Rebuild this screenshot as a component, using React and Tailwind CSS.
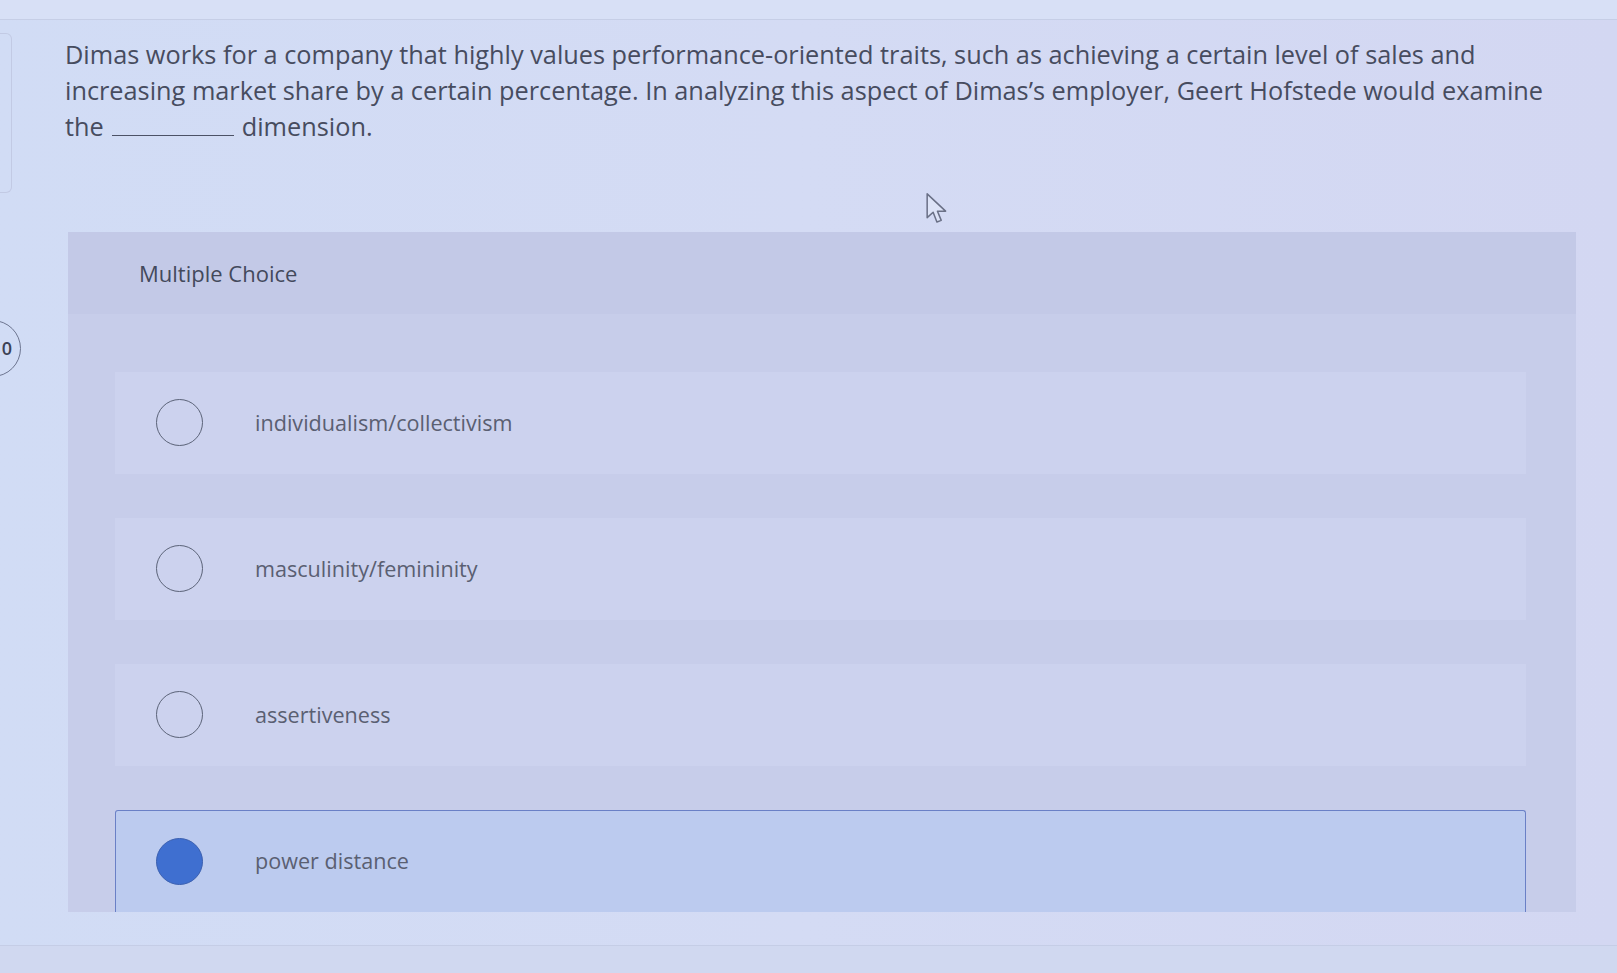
import React from 'react';

const options = [
  { label: 'individualism/collectivism', selected: false },
  { label: 'masculinity/femininity', selected: false },
  { label: 'assertiveness', selected: false },
  { label: 'power distance', selected: true },
];

const Radio = ({ checked }) =>
  checked ? (
    <span className="block w-[47px] h-[47px] shrink-0 rounded-full bg-[#3f6fd0] border border-[#3a5fb0]" />
  ) : (
    <span className="block w-[47px] h-[47px] shrink-0 rounded-full border-[1.5px] border-[#5b6378]" />
  );

const OptionRow = ({ label, selected }) => (
  <div
    className={
      selected
        ? 'flex items-center h-[106px] pl-[40px] rounded-t-[3px] border border-b-0 border-[#6a80c6] bg-[#bccbef]'
        : 'flex items-center h-[106px] pl-[41px] bg-[#ccd2ee]'
    }
  >
    <Radio checked={selected} />
    <span className="ml-[52px] text-[21.6px] text-[#5a5f72]">{label}</span>
  </div>
);

export default function App() {
  return (
    <div
      className="relative w-[1617px] h-[973px] overflow-hidden bg-gradient-to-r from-[#d1dcf5] via-[#d4dbf4] to-[#d3d7f2]"
      style={{ fontFamily: '"Open Sans", Lato, sans-serif' }}
    >
      <div className="h-[20px] border-b border-[#c6cee6] bg-[#d8e0f6]" />

      <div className="flex">
        {/* left rail, mostly off screen */}
        <div className="w-[21px] shrink-0 flex flex-col">
          <div className="mt-[13px] h-[160px] w-[12px] rounded-r-[6px] border border-l-0 border-[#c2cae4]" />
          <div className="mt-[127px] -ml-[36px] w-[57px] h-[57px] rounded-full border-[1.5px] border-[#6d7590] flex items-center justify-end pr-[8px] text-[18px] font-semibold text-[#3c4256]">
            0
          </div>
        </div>

        <div className="flex-1 ml-[44px]">
          <p className="mt-[16px] text-[25.3px] leading-[36px] text-[#474c5f] whitespace-nowrap">
            Dimas works for a company that highly values performance-oriented traits, such as achieving a certain level of sales and
            <br />
            increasing market share by a certain percentage. In analyzing this aspect of Dimas’s employer, Geert Hofstede would examine
            <br />
            the
            <span className="inline-block w-[122px] h-[1px] mx-[8px] border-b-[1.5px] border-[#4c5266] align-baseline" />
            dimension.
          </p>

          <div className="mt-[88px] ml-[3px] w-[1508px] h-[680px] overflow-hidden">
            <div className="h-[82px] flex items-center pl-[71px] bg-[#c3c9e7] text-[22px] text-[#43495c]">
              Multiple Choice
            </div>
            <div className="h-[598px] bg-[#c7cdea] pt-[58px] pl-[47px] pr-[50px] flex flex-col gap-[44px]">
              {options.map((o) => (
                <OptionRow key={o.label} {...o} />
              ))}
            </div>
          </div>
        </div>
      </div>

      {/* mouse pointer */}
      <svg
        className="absolute left-[925px] top-[191px]"
        width="26"
        height="36"
        viewBox="0 0 24 32"
        fill="none"
      >
        <path
          d="M2 2 L2 24 L7.5 19 L11 28 L15 26.5 L11.5 18 L19 18 Z"
          fill="#dde3f7"
          stroke="#6a7086"
          strokeWidth="1.4"
          strokeLinejoin="round"
        />
      </svg>

      <div className="absolute left-0 right-0 top-[945px] h-[28px] border-t border-[#c5cde6] bg-[#d0d8f0]" />
    </div>
  );
}
